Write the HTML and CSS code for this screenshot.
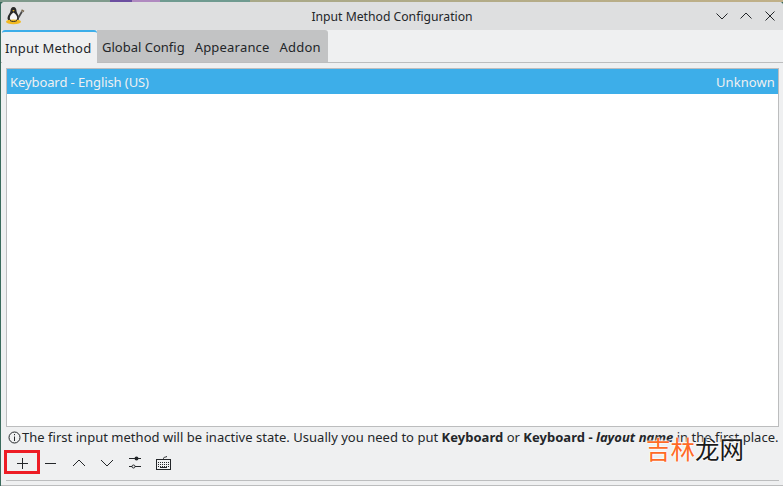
FILE: index.html
```html
<!DOCTYPE html>
<html lang="en">
<head>
    <meta charset="UTF-8">
    <title>Input Method Configuration</title>
    <link rel="stylesheet" href="styles.css">
</head>
<body>
    <div class="desktop-strip"></div>
    <div class="window">
        <div class="titlebar">
            <svg class="app-icon" width="20" height="20" viewBox="0 0 20 20">
                <path d="M8.500 1C6.500 1 5.500 3 5.500 5C5.500 7 2.500 9 2.500 12C2.500 15 6 16.500 8.500 16.500C11 16.500 14 15 14 12C14 9 11.500 7 11.500 5C11.500 3 10.500 1 8.500 1Z" fill="#2a2a2a"/>
                <path d="M8.500 6.500C6.800 7.500 4.800 9.500 4.800 12C4.800 14 6.800 15 8.500 15C10.200 15 12.200 14 12.200 12C12.200 9.500 10.200 7.500 8.500 6.500Z" fill="#f6f6f6"/>
                <ellipse cx="8.500" cy="15.800" rx="7.500" ry="2.400" fill="#f2b91f"/>
                <path d="M5 14.500C6.500 15.800 10.500 15.800 12 14.500" stroke="#2a2a2a" stroke-width="1" fill="none"/>
                <path d="M7.300 4.600L8.500 5.600L9.700 4.600L8.500 4Z" fill="#f2b91f"/>
                <path d="M13.500 11.500L17 5.500" stroke="#4a4a4a" stroke-width="1.800" fill="none"/>
                <path d="M16.500 4L19 5.500" stroke="#7a6a50" stroke-width="1.500" fill="none"/>
            </svg>
            <div class="title">Input Method Configuration</div>
            <div class="window-buttons">
                <svg width="14" height="14" viewBox="0 0 14 14"><path d="M1.500 4.500L7 10L12.500 4.500" class="glyph"/></svg>
                <svg width="14" height="14" viewBox="0 0 14 14"><path d="M1.500 9.500L7 4L12.500 9.500" class="glyph"/></svg>
                <svg width="14" height="14" viewBox="0 0 14 14"><path d="M2.500 2.500L11.500 11.500M11.500 2.500L2.500 11.500" class="glyph"/></svg>
            </div>
        </div>

        <div class="tabs">
            <div class="tab active">Input Method</div>
            <div class="tab-rest">
                <div class="tab">Global Config</div>
                <div class="tab tab-wide">Appearance</div>
                <div class="tab tab-wide">Addon</div>
            </div>
        </div>

        <div class="pane">
            <div class="list">
                <div class="list-row">
                    <span class="row-name">Keyboard - English (US)</span>
                    <span class="row-state">Unknown</span>
                </div>
            </div>
            <div class="hint">
                <svg width="13" height="13" viewBox="0 0 13 13">
                    <circle cx="6.500" cy="6.500" r="5.500" class="glyph"/>
                    <path d="M6.500 5.500V10M6.500 3V4.200" class="glyph"/>
                </svg>
                <span>The first input method will be inactive state. Usually you need to put <b>Keyboard</b> or <b>Keyboard - <i>layout name</i></b> in the first place.</span>
            </div>
            <div class="toolbar">
                <div class="tool tool-add">
                    <svg width="14" height="14" viewBox="0 0 14 14"><path d="M7.500 3V14M2 8.500H13" class="glyph"/></svg>
                </div>
                <div class="tool">
                    <svg width="14" height="14" viewBox="0 0 14 14"><path d="M1 7.500H12" class="glyph"/></svg>
                </div>
                <div class="tool">
                    <svg width="14" height="14" viewBox="0 0 14 14"><path d="M1 10L7 4L13 10" class="glyph"/></svg>
                </div>
                <div class="tool">
                    <svg width="14" height="14" viewBox="0 0 14 14"><path d="M1 4L7 10L13 4" class="glyph"/></svg>
                </div>
                <div class="tool">
                    <svg width="14" height="14" viewBox="0 0 14 14">
                        <path d="M1 2.500H13M1 10.500H4M7 10.500H13" class="glyph"/>
                        <circle cx="8.500" cy="2.500" r="2" fill="#232629"/>
                        <circle cx="5.500" cy="10.500" r="1.500" class="glyph"/>
                    </svg>
                </div>
                <div class="tool">
                    <svg width="15" height="14" viewBox="0 0 15 14">
                        <path d="M7.500 3V2.500C7.500 1 9 1.500 11 .5" class="glyph"/>
                        <rect x=".5" y="3.500" width="14" height="10" class="glyph"/>
                        <path d="M2 6.500H13M2 8.500H13M2 10.500H13" class="glyph" stroke-dasharray="1 1"/>
                        <path d="M4 11.500H11" class="glyph"/>
                    </svg>
                </div>
            </div>
            <div class="bottom-line"></div>
        </div>
    </div>
    <div class="watermark"><span class="wm-orange">吉林</span>龙网</div>
</body>
</html>
```

FILE: styles.css
```css
html, body {
    margin: 0;
    padding: 0;
}
body {
    width: 783px;
    height: 486px;
    overflow: hidden;
    position: relative;
    font-family: "Noto Sans", sans-serif;
    font-size: 13px;
    color: #232629;
    background-color: #3a6b5c;
}
.glyph {
    fill: none;
    stroke: #232629;
    stroke-width: 1;
}
.desktop-strip {
    height: 2px;
    background: linear-gradient(90deg, #7f9a8c 0, #7f9a8c 110px, #6b4fa0 110px, #6b4fa0 132px, #b08ac0 132px, #b08ac0 160px, #6f9a90 160px, #6f9a90 250px, #a8a888 250px, #c0b088 783px);
}
.window {
    height: 484px;
    margin-left: 1px;
    box-sizing: border-box;
    display: flex;
    flex-direction: column;
    background-color: #eff0f1;
    border-bottom: 1px solid #bcbdbe;
    border-radius: 4px 4px 0 0;
}
.titlebar {
    height: 28px;
    flex: none;
    display: flex;
    align-items: center;
    background-color: #dedfe0;
    border-radius: 4px 4px 0 0;
    padding: 0 5px 0 4px;
}
.app-icon {
    flex: none;
}
.title {
    flex: 1;
    text-align: center;
    font-size: 12.2px;
    padding-left: 44px;
}
.window-buttons {
    display: flex;
    gap: 10px;
    padding-right: 1px;
}
.tabs {
    display: flex;
    height: 32px;
    flex: none;
    align-items: stretch;
    padding-left: 1px;
    border-bottom: 1px solid #bcbdbe;
}
.tab {
    padding: 0 5px;
    line-height: 34px;
    white-space: nowrap;
}
.tab.active {
    width: 89px;
    padding: 0 3px;
    background-color: #eff0f1;
    border-top: 2px solid #3daee9;
    border-radius: 3px 3px 0 0;
    margin-bottom: -1px;
    line-height: 32px;
    letter-spacing: .17px;
}
.tab-rest {
    display: flex;
    background-color: #c2c3c4;
    border-radius: 0 3px 0 0;
    padding-right: 2px;
}
.tab-wide {
    letter-spacing: .2px;
}
.pane {
    flex: 1;
    padding: 5px 4px 0 5px;
    display: flex;
    flex-direction: column;
}
.list {
    height: 357px;
    flex: none;
    background-color: #fff;
    border: 1px solid #bcbdbe;
}
.list-row {
    height: 25px;
    background-color: #3daee9;
    color: #eff0f1;
    display: flex;
    justify-content: space-between;
    align-items: center;
    padding: 0 3px;
}
.row-name {
    letter-spacing: -.09px;
}
.row-state {
    letter-spacing: .1px;
}
.hint {
    display: flex;
    align-items: center;
    gap: 1px;
    height: 18px;
    margin: 1px 0 0 2px;
    white-space: nowrap;
    letter-spacing: .023px;
}
.toolbar {
    display: flex;
    align-items: center;
    height: 24px;
    margin: 4px 0 0 -2px;
}
.tool {
    width: 28px;
    height: 24px;
    padding-top: 2px;
    display: flex;
    align-items: center;
    justify-content: center;
    box-sizing: border-box;
}
.tool-add {
    width: 36px;
    margin-right: -3px;
    padding-top: 0;
    border: 3px solid #ed1c24;
}
.bottom-line {
    height: 1px;
    margin-top: auto;
    margin-bottom: 4px;
    background-color: #bcbdbe;
}
.watermark {
    position: absolute;
    left: 646px;
    top: 435px;
    font-family: "Noto Sans CJK SC", sans-serif;
    font-size: 24.5px;
    line-height: 28px;
    color: #1a1a1a;
    text-shadow: 0 0 2px #fff, 0 0 2px #fff, 0 0 2px #fff;
}
.wm-orange {
    color: #ff6a26;
}
```
